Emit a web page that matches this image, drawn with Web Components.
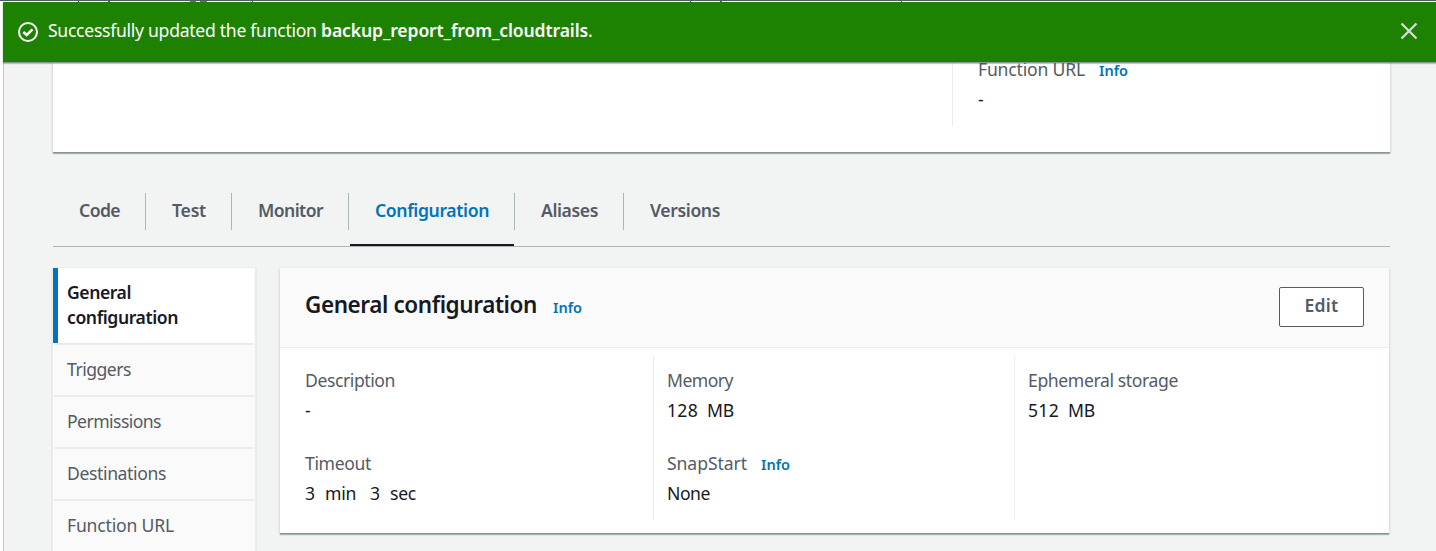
<!DOCTYPE html>
<html lang="en">
<head>
<meta charset="utf-8">
<title>Lambda function</title>
<style>
html,body{margin:0;height:551px;overflow:hidden;background:#f2f3f3}
body{font-family:"Noto Sans","Open Sans",sans-serif;font-size:17.6px;color:#16191f;line-height:25px}
</style>
</head>
<body>
<lambda-page></lambda-page>
<script>
function define(name, html, init) {
  const t = document.createElement('template');
  t.innerHTML = html;
  customElements.define(name, class extends HTMLElement {
    constructor() {
      super();
      this.attachShadow({mode: 'open'}).appendChild(t.content.cloneNode(true));
    }
    connectedCallback() { if (init) init(this, this.shadowRoot); }
  });
}

// The link, bar, tab and button styles must apply before text is measured,
// so the page element is defined last and its text runs are fitted on a final pass.
define('fit-text', `<style>:host{display:inline-block;white-space:nowrap}</style><slot></slot>`);

function fit(root) {
  root.querySelectorAll('*').forEach(el => {
    if (el.localName === 'fit-text') {
      const w = +el.getAttribute('w'), n = el.textContent.length;
      const natural = el.getBoundingClientRect().width;
      el.style.letterSpacing = ((w - natural) / n).toFixed(3) + 'px';
      el.style.width = w + 'px';
    }
    if (el.shadowRoot) fit(el.shadowRoot);
  });
}

define('info-link', `<style>
:host{display:inline-block;font-size:14.5px;font-weight:600;color:#0073bb}
</style><fit-text w="29">Info</fit-text>`);

define('flash-bar', `<style>
:host{display:flex;align-items:center;box-sizing:border-box;height:60px;padding:0 18px 0 14px;background:#1d8102;color:#fff;box-shadow:0 1px 1px #879596,0 2px 1px rgba(0,28,36,.2)}
.msg{flex:1;margin:0 0 3px 9px;height:25px}
b{font-weight:600}svg{display:block}.x{margin-bottom:2px}
</style>
<svg width="22" height="22" viewBox="0 0 22 22" fill="none" stroke="#fff" stroke-width="2"><circle cx="11" cy="11" r="9"/><path d="M6.3 11 9.7 14 15.5 8.4" stroke-width="2.6"/></svg>
<div class="msg"><fit-text w="273">Successfully updated the function&nbsp;</fit-text><b><fit-text w="267">backup_report_from_cloudtrails</fit-text></b><fit-text w="4">.</fit-text></div>
<svg class="x" width="18" height="18" viewBox="0 0 18 18" fill="none" stroke="#d5dbdb" stroke-width="2.3"><path d="M1.5 1.5l15 15M16.5 1.5l-15 15"/></svg>`);

define('ui-tab', `<style>
:host{display:flex;box-sizing:border-box;height:53px;font-weight:600;color:#545b64}
.t{padding:5px 25px 0 26px;height:46px;border-bottom:2px solid transparent}
.sep{width:1px;height:37px;background:#aab7b8}
:host([active]){color:#0073bb}
:host([active]) .t{border-color:#16191f;margin-left:1px;padding-left:25px}
:host([last]) .sep{display:none}
</style><div class="t"><slot></slot></div><div class="sep"></div>`);

define('ui-tabs', `<style>
:host{display:flex;height:53px;border-bottom:1px solid #aab7b8}
</style><slot></slot>`);

define('nav-item', `<style>
:host{display:block;box-sizing:border-box;height:52px;border-top:2px solid #eaeded;padding:12px 13px;color:#545b64;background:#fafafa;margin:0 1px}
:host([active]){height:75px;border-top:0;background:#fff;color:#16191f;font-weight:600;border-left:5px solid #0073bb;padding:12px 9px;margin-left:0}
</style><slot></slot>`);

define('side-nav', `<style>
:host{display:block;width:202px;height:300px;background:#fafafa;box-shadow:0 0 0 1px #eaeded,-1px 1px 1px #aab7b8,1px 1px 1px #aab7b8}
</style><slot></slot>`);

define('key-value', `<style>
:host{display:block;height:83px}
.k{color:#545b64;height:25px;white-space:nowrap}
.v{margin-top:5px;height:25px;display:flex}
</style><div class="k"><slot name="key"></slot></div><div class="v"><slot></slot></div>`);

define('kv-column', `<style>
:host{display:block;box-sizing:border-box;height:164px;padding:12px 0 0 13px;border-left:1px solid #eaeded}
:host([first]){border-color:transparent;padding-left:12px}
</style><slot></slot>`);

define('ui-panel', `<style>
:host{display:block;background:#fff;box-shadow:0 1px 0 #879596,0 2px 1px rgba(0,28,36,.25),0 0 0 1px #eaeded,1px 1px 1px #aab7b8,-1px 1px 1px #aab7b8}
</style><slot></slot>`);

define('ui-button', `<style>
:host{display:flex;justify-content:center;box-sizing:border-box;width:85px;height:40px;padding-top:5px;border:1px solid #545b64;border-radius:2px;background:#fff;color:#545b64;font-weight:600}
</style><slot></slot>`);

define('lambda-page', `<style>
:host{display:grid;grid-template-rows:62px 489px;height:551px;background:#fff}
.head{display:flex;flex-direction:column;padding-left:3px;position:relative;z-index:1}
.strip{height:1px;margin-left:-3px;background:#545b64}
.gap{height:1px;margin-left:-3px;background:
linear-gradient(#545b64,#545b64) 78px 0/1px 1px no-repeat,
linear-gradient(#545b64,#545b64) 108px 0/2px 1px no-repeat,
linear-gradient(#6b7078,#6b7078) 190px 0/6px 1px no-repeat,
linear-gradient(#6b7078,#6b7078) 200px 0/7px 1px no-repeat,
linear-gradient(#545b64,#545b64) 252px 0/1px 1px no-repeat,
linear-gradient(#545b64,#545b64) 690px 0/1px 1px no-repeat,
linear-gradient(#545b64,#545b64) 720px 0/2px 1px no-repeat,
linear-gradient(#545b64,#545b64) 901px 0/1px 1px no-repeat,#fff}
.main{margin-left:3px;border-left:1px solid #c4cacb;background:#f2f3f3;padding:0 46px 0 49px}
.over{height:90px;display:flex}
.url{margin-left:899px;border-left:1px solid #eaeded;height:64px;padding-left:25px}
.url key-value{margin-top:-5px}
ui-tabs{margin-top:41px}
.cols{display:grid;grid-template-columns:202px 1109px;gap:25px;margin-top:21px;align-items:start}
.hd{display:flex;justify-content:space-between;height:79px;border-bottom:1px solid #eaeded;background:#fafafa;padding:0 25px}
.hd ui-button{margin-top:19px}
.ttl{padding-top:24px;white-space:nowrap}
.ttl b{font-size:22.5px;font-weight:600}
.grid{display:grid;grid-template-columns:361px 361px 1fr;padding:8px 0 13px 12px}
</style>
<div class="head"><div class="strip"></div><div class="gap"></div><flash-bar></flash-bar></div>
<div class="main">
<ui-panel class="over"><div class="url"><key-value><span slot="key"><fit-text w="107">Function URL</fit-text><info-link style="margin-left:14px"></info-link></span>-</key-value></div></ui-panel>
<ui-tabs>
<ui-tab><fit-text w="41">Code</fit-text></ui-tab>
<ui-tab><fit-text w="34">Test</fit-text></ui-tab>
<ui-tab><fit-text w="65">Monitor</fit-text></ui-tab>
<ui-tab active><fit-text w="114">Configuration</fit-text></ui-tab>
<ui-tab><fit-text w="57">Aliases</fit-text></ui-tab>
<ui-tab last><fit-text w="70">Versions</fit-text></ui-tab>
</ui-tabs>
<div class="cols">
<side-nav>
<nav-item active><fit-text w="64">General</fit-text><br><fit-text w="111">configuration</fit-text></nav-item>
<nav-item><fit-text w="64">Triggers</fit-text></nav-item>
<nav-item><fit-text w="94">Permissions</fit-text></nav-item>
<nav-item><fit-text w="99">Destinations</fit-text></nav-item>
<nav-item><fit-text w="107">Function URL</fit-text></nav-item>
</side-nav>
<ui-panel>
<div class="hd"><div class="ttl"><b><fit-text w="232">General configuration</fit-text></b><info-link style="margin-left:16px"></info-link></div><ui-button><fit-text w="34">Edit</fit-text></ui-button></div>
<div class="grid">
<kv-column first><key-value><fit-text slot="key" w="90">Description</fit-text>-</key-value><key-value><fit-text slot="key" w="66">Timeout</fit-text><fit-text w="10">3</fit-text><fit-text w="31" style="margin-left:10px">min</fit-text><fit-text w="10" style="margin-left:14px">3</fit-text><fit-text w="26" style="margin-left:10px">sec</fit-text></key-value></kv-column>
<kv-column><key-value><fit-text slot="key" w="66">Memory</fit-text><fit-text w="31">128</fit-text><fit-text w="27" style="margin-left:9px">MB</fit-text></key-value><key-value><span slot="key"><fit-text w="80">SnapStart</fit-text><info-link style="margin-left:14px"></info-link></span><fit-text w="43">None</fit-text></key-value></kv-column>
<kv-column><key-value><fit-text slot="key" w="150">Ephemeral storage</fit-text><fit-text w="31">512</fit-text><fit-text w="27" style="margin-left:9px">MB</fit-text></key-value></kv-column>
</div>
</ui-panel>
</div>
</div>`, (el, root) => fit(root));
</script>
</body>
</html>
